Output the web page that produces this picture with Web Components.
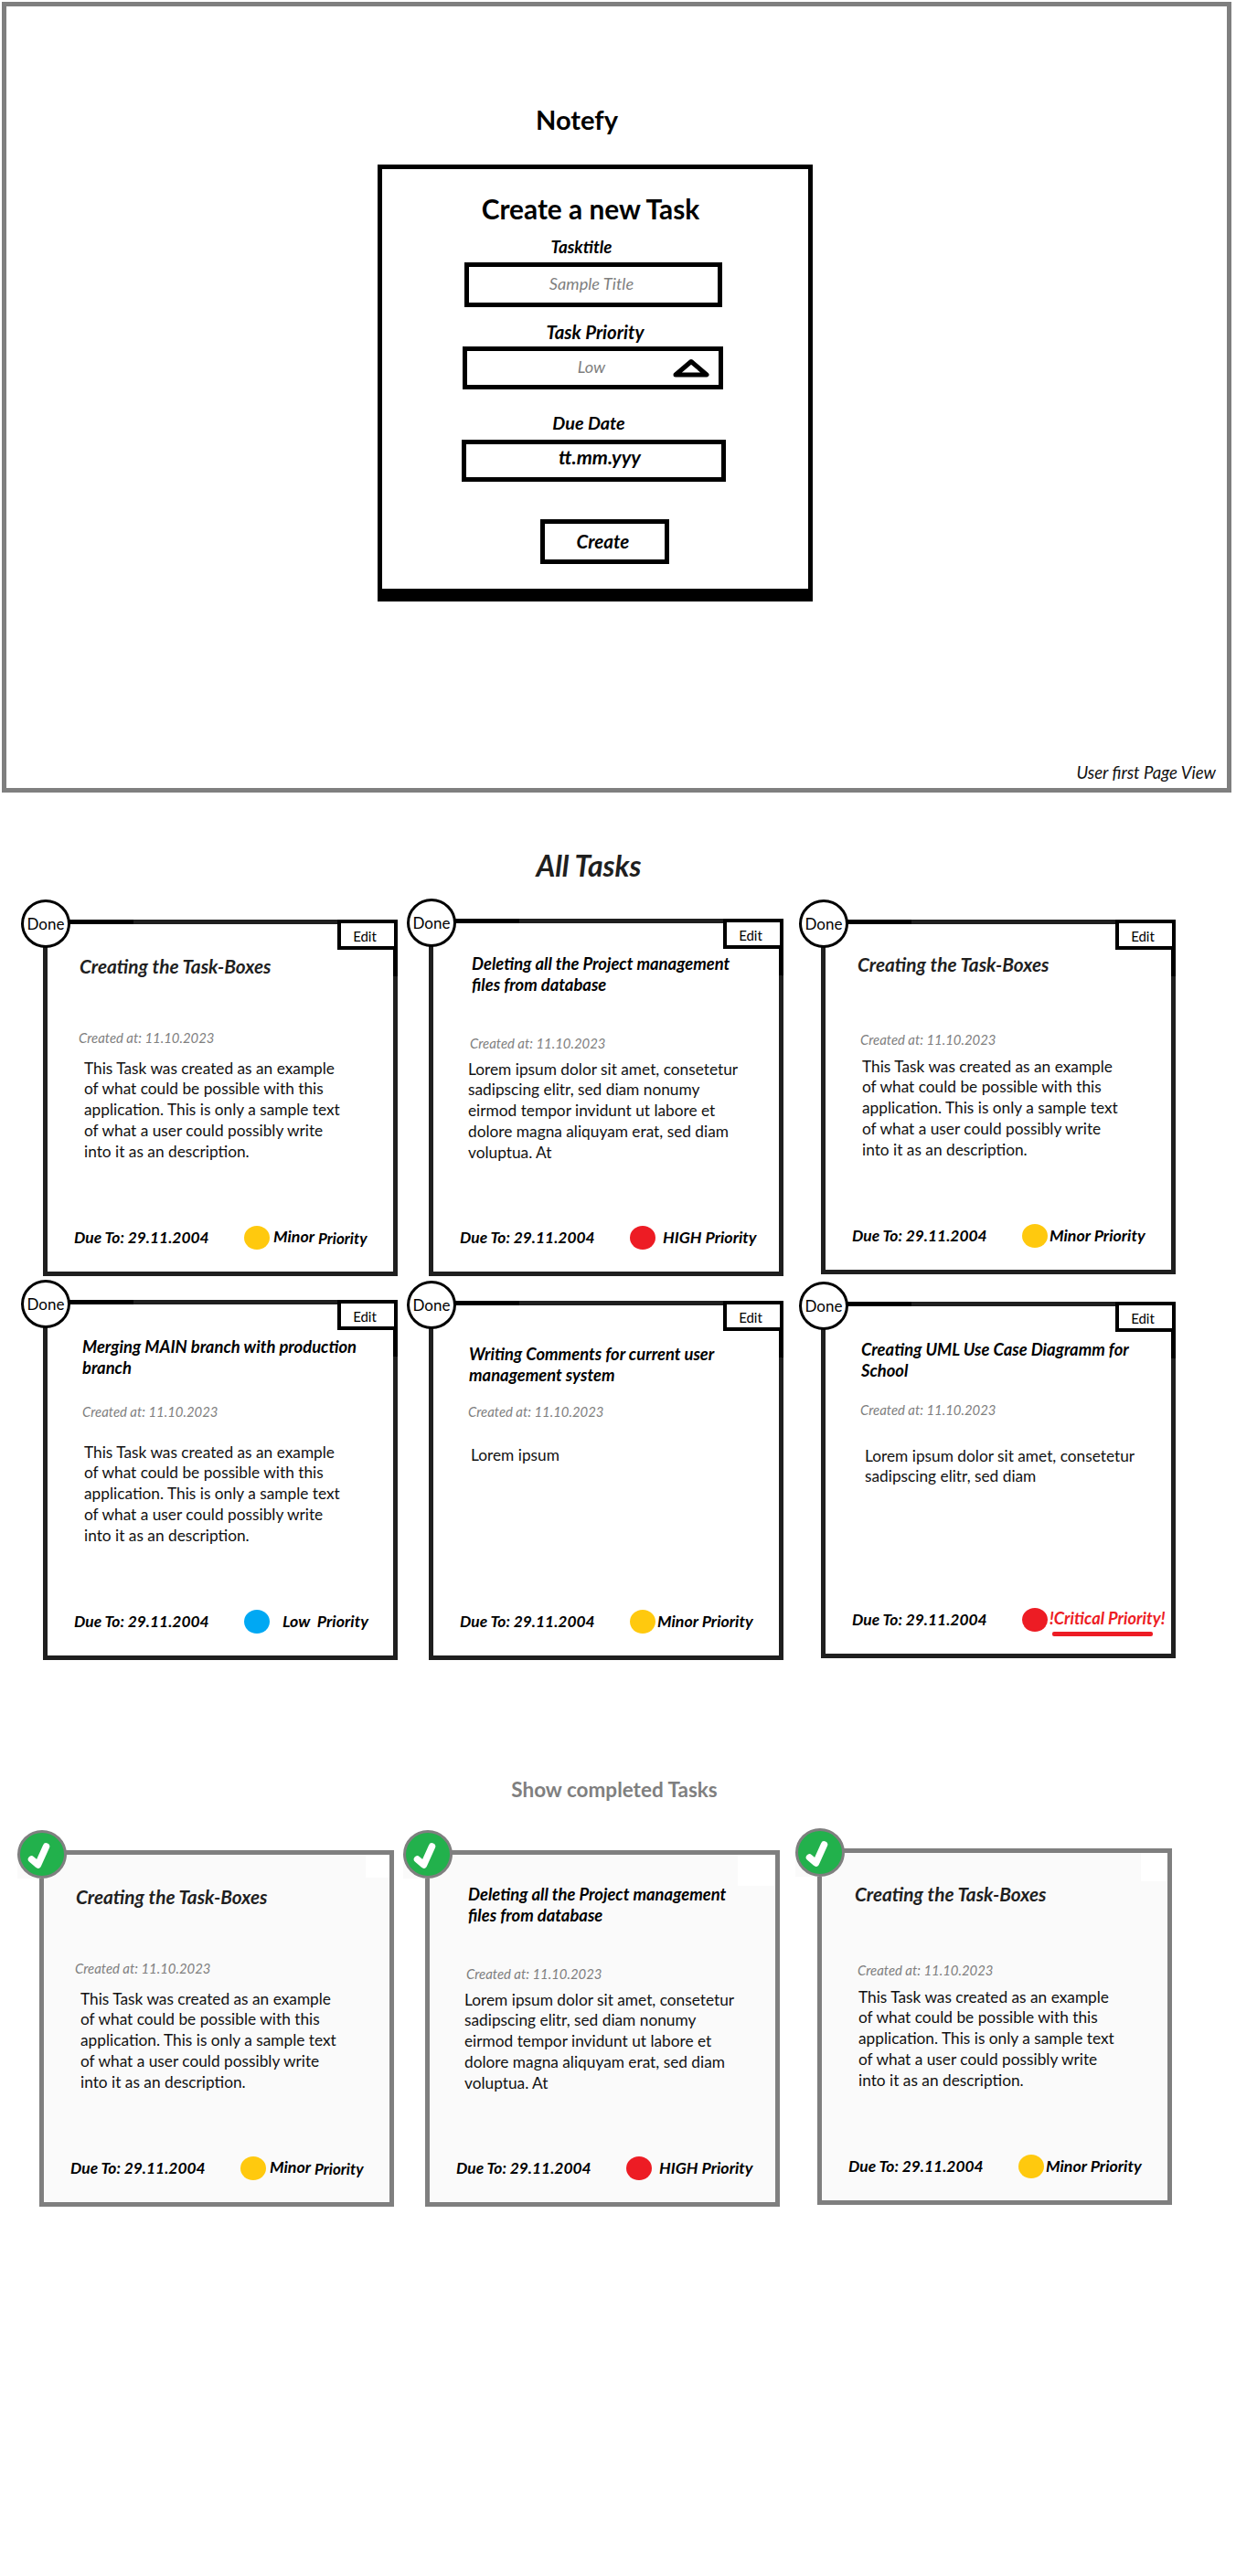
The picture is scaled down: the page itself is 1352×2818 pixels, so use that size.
<!DOCTYPE html>
<html lang="en">
<head>
<meta charset="utf-8">
<title>Notefy</title>
<style>
html,body{margin:0;padding:0;background:#fff}
body{font-family:Lato,"Liberation Sans",sans-serif;min-height:2818px;color:#000}
</style>
</head>
<body>
<app-page></app-page>

<template id="tpl-page">
<style>
:host{display:block;width:1352px}
.frame{box-sizing:border-box;width:1345px;height:865px;margin:2px 0 0 2px;border:5px solid #7f7f7f;display:flex;flex-direction:column}
.brand{margin:104px 0 0;width:1248px;text-align:center;font:700 29px/40px Lato,sans-serif;color:#000}
new-task-form{margin:29px 0 0 406px}
.caption{margin:176px 0 0;padding-right:12px;text-align:right;font:italic 400 18.6px/22px Lato,sans-serif;color:#111}
h2{margin:0;font-family:Lato,sans-serif}
.all{margin-top:60px;width:1288px;text-align:center;font:italic 700 32px/40px Lato,sans-serif;color:#1f1f1f}
.show{margin-top:127px;width:1344px;text-align:center;font:700 22.5px/30px Lato,sans-serif;color:#7f7f7f}
.row{display:flex;align-items:flex-start}
.r1{margin-top:38px;padding-left:47px}
.r2{margin-top:26px;padding-left:47px}
.r3{margin-top:49px;padding-left:43px}
</style>
<section class="frame">
  <div class="brand">Notefy</div>
  <new-task-form></new-task-form>
  <div class="caption">User first Page View</div>
</section>
<h2 class="all">All Tasks</h2>
<div class="row r1">
  <task-card h="390" mt="1" xt="40" yt="51" xc="39" yc="129" xd="45" yd="163" yf="348" xp="252" dot="#ffc90e" ink="#1f1f1f" big>
    <span slot="title">Creating the Task-Boxes</span>
    This Task was created as an example<br>of what could be possible with this<br>application. This is only a sample text<br>of what a user could possibly write<br>into it as an description.
    <span slot="priority"><span style="vertical-align:2px">Minor</span> <span style="font-size:17px">Priority</span></span>
  </task-card>
  <task-card h="391" ml="34" xt="47" yt="50" xc="45" yc="136" xd="43" yd="165" yf="349" xp="256" dot="#ed1c24">
    <span slot="title">Deleting all the Project management<br>files from database</span>
    Lorem ipsum dolor sit amet, consetetur<br>sadipscing elitr, sed diam nonumy<br>eirmod tempor invidunt ut labore et<br>dolore magna aliquyam erat, sed diam<br>voluptua. At
    <span slot="priority">HIGH Priority</span>
  </task-card>
  <task-card h="388" mt="1" ml="41" xt="40" yt="49" xc="43" yc="131" xd="45" yd="161" yf="346" xp="250" dot="#ffc90e" ink="#1f1f1f" big>
    <span slot="title">Creating the Task-Boxes</span>
    This Task was created as an example<br>of what could be possible with this<br>application. This is only a sample text<br>of what a user could possibly write<br>into it as an description.
    <span slot="priority">Minor Priority</span>
  </task-card>
</div>
<div class="row r2">
  <task-card h="394" xt="43" yt="52" xc="43" yc="122" xd="45" yd="167" yf="352" xp="262" dot="#00a8f3">
    <span slot="title">Merging MAIN branch with production<br>branch</span>
    This Task was created as an example<br>of what could be possible with this<br>application. This is only a sample text<br>of what a user could possibly write<br>into it as an description.
    <span slot="priority">Low&nbsp; Priority</span>
  </task-card>
  <task-card h="393" mt="1" ml="34" xt="44" yt="59" xc="43" yc="121" xd="46" yd="169" yf="351" xp="250" dot="#ffc90e">
    <span slot="title">Writing Comments for current user<br>management system</span>
    Lorem ipsum
    <span slot="priority">Minor Priority</span>
  </task-card>
  <task-card h="390" mt="2" ml="41" xt="44" yt="53" xc="43" yc="118" xd="48" yd="169" yf="348" xp="250" dot="#ed1c24" critical>
    <span slot="title">Creating UML Use Case Diagramm for<br>School</span>
    Lorem ipsum dolor sit amet, consetetur<br>sadipscing elitr, sed diam
    <span slot="priority">!Critical Priority!</span>
  </task-card>
</div>
<h2 class="show">Show completed Tasks</h2>
<div class="row r3">
  <task-card done h="390" mt="2" xt="40" yt="51" xc="39" yc="129" xd="45" yd="163" yf="348" xp="252" dot="#ffc90e" ink="#1f1f1f" big patchx="357" patchw="26" patchh="25">
    <span slot="title">Creating the Task-Boxes</span>
    This Task was created as an example<br>of what could be possible with this<br>application. This is only a sample text<br>of what a user could possibly write<br>into it as an description.
    <span slot="priority"><span style="vertical-align:2px">Minor</span> <span style="font-size:17px">Priority</span></span>
  </task-card>
  <task-card done h="390" mt="2" ml="34" xt="47" yt="49" xc="45" yc="135" xd="43" yd="164" yf="348" xp="256" dot="#ed1c24" patchx="342" patchw="41" patchh="34">
    <span slot="title">Deleting all the Project management<br>files from database</span>
    Lorem ipsum dolor sit amet, consetetur<br>sadipscing elitr, sed diam nonumy<br>eirmod tempor invidunt ut labore et<br>dolore magna aliquyam erat, sed diam<br>voluptua. At
    <span slot="priority">HIGH Priority</span>
  </task-card>
  <task-card done h="390" ml="41" xt="41" yt="50" xc="44" yc="133" xd="45" yd="163" yf="348" xp="250" dot="#ffc90e" ink="#1f1f1f" big patchx="354" patchw="29" patchh="31">
    <span slot="title">Creating the Task-Boxes</span>
    This Task was created as an example<br>of what could be possible with this<br>application. This is only a sample text<br>of what a user could possibly write<br>into it as an description.
    <span slot="priority">Minor Priority</span>
  </task-card>
</div>
</template>

<template id="tpl-form">
<style>
:host{display:block;box-sizing:border-box;width:476px;height:478px;border:5px solid #000;border-bottom-width:14px;background:#fff}
.head{margin:26px 0 0;padding-right:10px;text-align:center;font:700 29.8px/36px Lato,sans-serif}
form-field{display:block}
.create{box-sizing:border-box;display:flex;align-items:center;justify-content:center;width:141px;height:49px;margin:41px 0 0 173px;padding-right:4px;border:5px solid #000;font:italic 700 20.6px/1 Lato,sans-serif;background:#fff}
</style>
<div class="head">Create a new Task</div>
<form-field label="Tasktitle" value="Sample Title" cx="218" x="90" w="282" h="49" gap="6" top="12" tone="hint" size="18.8"></form-field>
<form-field label="Task Priority" value="Low" cx="233" x="88" w="285" h="47" gap="5" top="16" tone="hint" arrow size="20.4"></form-field>
<form-field label="Due Date" value="tt.mm.yyy" cx="226" x="87" w="289" h="46" gap="8" top="25" tone="strong" size="19.8"></form-field>
<div class="create">Create</div>
</template>

<script>
function cloneTpl(el,id){
  const r=el.attachShadow({mode:'open'});
  r.appendChild(document.getElementById(id).content.cloneNode(true));
  return r;
}
class AppPage extends HTMLElement{constructor(){super();cloneTpl(this,'tpl-page')}}
class NewTaskForm extends HTMLElement{constructor(){super();cloneTpl(this,'tpl-form')}}
class FormField extends HTMLElement{
  connectedCallback(){
    if(this.shadowRoot)return;
    const a=k=>this.getAttribute(k);
    const r=this.attachShadow({mode:'open'});
    const hint=a('tone')==='hint';
    const labelW=2*(+a('cx'));
    const valueCenter=a('tone')==='strong'?(656-505-5):(a('arrow')!==null?(647-506-5):(647-508-5));
    r.innerHTML=`<style>
      :host{display:block;margin-top:${a('top')}px}
      .label{width:${labelW}px;text-align:center;font:italic 700 ${a('size')}px/22px Lato,sans-serif;color:#000}
      .box{box-sizing:border-box;position:relative;display:flex;align-items:center;width:${a('w')}px;height:${a('h')}px;margin:${a('gap')}px 0 0 ${a('x')}px;border:5px solid #000;background:#fff}
      .val{flex:none;width:${valueCenter*2}px;text-align:center;white-space:nowrap;font:italic ${hint?400:700} ${hint?18.2:21.6}px/1 Lato,sans-serif;color:${hint?'#7f7f7f':'#000'};margin-top:${hint?-2:-7}px}
      svg{position:absolute;right:10px;top:8px}
    </style>
    <div class="label">${a('label')}</div>
    <div class="box"><span class="val">${a('value')}</span>${a('arrow')!==null?`<svg width="40" height="21" viewBox="0 0 40 21"><path d="M3 18 L20 3.5 L37 18 Z" fill="#fff" stroke="#000" stroke-width="5" stroke-linejoin="round"/></svg>`:''}</div>`;
  }
}
class StatusBadge extends HTMLElement{
  connectedCallback(){
    if(this.shadowRoot)return;
    const r=this.attachShadow({mode:'open'});
    const done=this.hasAttribute('done');
    r.innerHTML=`<style>
      :host{display:block;position:absolute;left:-29px;top:-27px;width:54px;height:53px;${done?'background:linear-gradient(transparent 50%,#fafafa 50%);':''}}
      .c{box-sizing:border-box;width:100%;height:100%;border-radius:50%;display:flex;align-items:center;justify-content:center;
         border:${done?'3px solid #7f7f7f':'3.5px solid #000'};background:${done?'#22b14c':'#fff'};font:400 17px/1 Lato,sans-serif;color:#000}
      svg{display:block}
    </style><div class="c">${done?`<svg width="48" height="47" viewBox="0 0 48 47"><path d="M12.5 29 L19.5 35 L28.5 15" fill="none" stroke="#fff" stroke-width="7.5" stroke-linecap="round" stroke-linejoin="round"/></svg>`:'Done'}</div>`;
  }
}
class TaskCard extends HTMLElement{
  connectedCallback(){
    if(this.shadowRoot)return;
    const n=(k,d=0)=>this.hasAttribute(k)?+this.getAttribute(k):d;
    const done=this.hasAttribute('done'), crit=this.hasAttribute('critical'), big=this.hasAttribute('big');
    const h=n('h'), B=5, LT=23, LC=20, LD=22.75, FH=26;
    const ttop=n('yt')-B-LT/2-1, tH=n('yc')-B-LC/2;
    const dGap=n('yd')-LD/2-(n('yc')+LC/2);
    const fBottom=h-B-(n('yf')+FH/2);
    const xf=34, xdot=220, dotW=28;
    const r=this.attachShadow({mode:'open'});
    const line=done?'#7f7f7f':'#1f1f1f';
    r.innerHTML=`<style>
      :host{display:block;flex:none;box-sizing:border-box;position:relative;width:388px;height:${h}px;margin:${n('mt')}px 0 0 ${n('ml')}px;
        border:${B}px solid ${line};background:${done?'#fafafa':'#fff'};color:#000}
      .col{display:flex;flex-direction:column;height:100%}
      .title{box-sizing:border-box;height:${tH}px;padding:${ttop}px 0 0 ${n('xt')-B}px;font:italic 700 ${big?20.8:18.4}px/${LT}px Lato,sans-serif;color:${this.getAttribute('ink')||'#000'};white-space:nowrap}
      .created{height:${LC}px;padding-left:${n('xc')-B}px;font:italic 400 14.9px/${LC}px Lato,sans-serif;color:#7f7f7f}
      .desc{margin-top:${dGap}px;padding-left:${n('xd')-B}px;font:400 17.3px/${LD}px Lato,sans-serif;color:#111;white-space:nowrap}
      .foot{margin-top:auto;margin-bottom:${fBottom}px;height:${FH}px;display:flex;align-items:center;padding-left:${xf-B}px}
      .due{width:${xdot-xf}px;font:italic 700 17.4px/1 Lato,sans-serif;color:#000;white-space:nowrap}
      .dot{width:${dotW}px;height:${FH}px;border-radius:50%;background:${this.getAttribute('dot')};flex:none}
      .pri{margin-left:${n('xp')-xdot-dotW}px;font:italic 700 ${crit?18.3:17.8}px/1 Lato,sans-serif;color:${crit?'#ed1c24':'#000'};white-space:nowrap;${crit?'margin-top:-3px;':''}}
      .edit{position:absolute;right:-${B}px;top:-${B}px;box-sizing:border-box;width:66px;height:33px;padding:3px 6px 0 0;border:4.5px solid #000;background:#fff;display:flex;align-items:center;justify-content:center;font:400 15px/1 Lato,sans-serif;color:#000}
      .strip-a{position:absolute;left:24px;top:-${B}px;width:70px;height:${B}px;background:#000}
      .strip-b{position:absolute;right:-${B}px;top:28px;width:${B}px;height:29px;background:#000}
      .patch{position:absolute;top:0;left:${n('patchx')-B}px;width:${n('patchw')}px;height:${n('patchh')}px;background:#fff}
      .under{position:absolute;left:${253-B}px;bottom:${fBottom-5}px;width:110px;height:5px;border-radius:2px;background:#ed1c24}
    </style>
    <div class="col">
      <div class="title"><slot name="title"></slot></div>
      <div class="created">Created at: 11.10.2023</div>
      <div class="desc"><slot></slot></div>
      <div class="foot"><span class="due">Due To: 29.11.2004</span><span class="dot"></span><span class="pri"><slot name="priority"></slot></span></div>
    </div>
    ${crit?'<div class="under"></div>':''}
    ${done?`<div class="patch"></div><status-badge done></status-badge>`:`<div class="strip-a"></div><div class="strip-b"></div><div class="edit">Edit</div><status-badge></status-badge>`}`;
  }
}
customElements.define('app-page',AppPage);
customElements.define('new-task-form',NewTaskForm);
customElements.define('form-field',FormField);
customElements.define('status-badge',StatusBadge);
customElements.define('task-card',TaskCard);
</script>
</body>
</html>
